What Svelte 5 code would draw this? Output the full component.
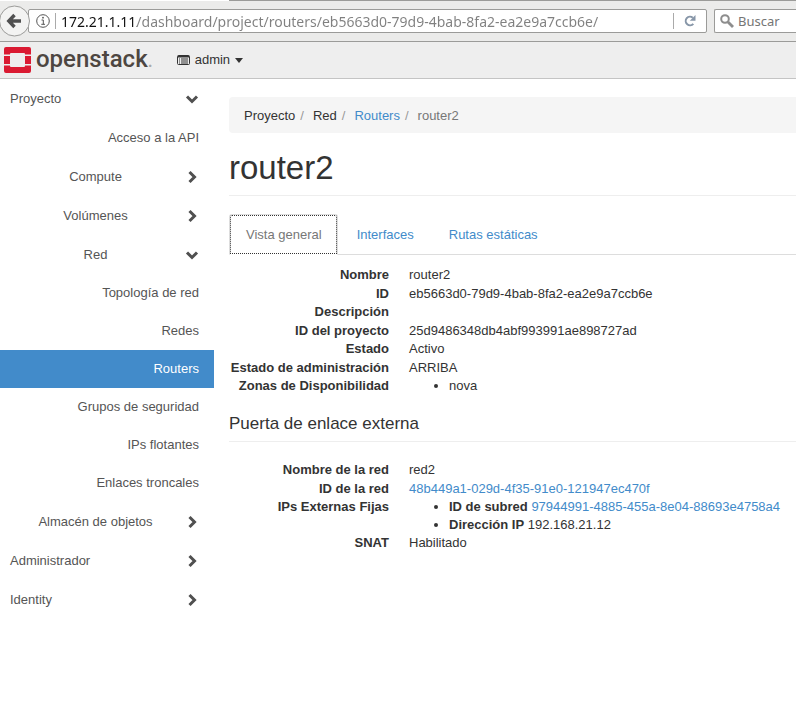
<script>
  const address = '172.21.1.11/dashboard/project/routers/eb5663d0-79d9-4bab-8fa2-ea2e9a7ccb6e/';

  const menu = [
    { label: 'Proyecto', kind: 'panel', open: true },
    { label: 'Acceso a la API', kind: 'entry' },
    { label: 'Compute', kind: 'group', open: false },
    { label: 'Volúmenes', kind: 'group', open: false },
    { label: 'Red', kind: 'group', open: true },
    { label: 'Topología de red', kind: 'leaf' },
    { label: 'Redes', kind: 'leaf' },
    { label: 'Routers', kind: 'leaf', active: true },
    { label: 'Grupos de seguridad', kind: 'leaf' },
    { label: 'IPs flotantes', kind: 'leaf' },
    { label: 'Enlaces troncales', kind: 'leaf' },
    { label: 'Almacén de objetos', kind: 'group', open: false },
    { label: 'Administrador', kind: 'panel', open: false },
    { label: 'Identity', kind: 'panel', open: false }
  ];

  const tabs = ['Vista general', 'Interfaces', 'Rutas estáticas'];
  let current = $state(0);

  const details = [
    ['Nombre', 'router2'],
    ['ID', 'eb5663d0-79d9-4bab-8fa2-ea2e9a7ccb6e'],
    ['Descripción', ''],
    ['ID del proyecto', '25d9486348db4abf993991ae898727ad'],
    ['Estado', 'Activo'],
    ['Estado de administración', 'ARRIBA']
  ];
</script>

<div class="window">
  <div class="strip"></div>
  <div class="toolbar">
    <button class="back" aria-label="Atrás">
      <svg width="32" height="32" viewBox="0 0 32 32">
        <circle cx="14.500" cy="16" r="15" fill="#f3f3f2" stroke="#9b9b99" />
        <path d="M14.500 10 8.800 16 14.500 22M9 16H21" fill="none" stroke="#505050" stroke-width="3.400" />
      </svg>
    </button>
    <div class="address">
      <svg width="14" height="14" viewBox="0 0 14 14">
        <circle cx="7" cy="7" r="6.300" fill="none" stroke="#555" />
        <path d="M5.500 6H7.300V10.300M5.300 10.300H9" fill="none" stroke="#555" />
        <circle cx="7" cy="3.700" r=".9" fill="#555" />
      </svg>
      <span class="rule"></span>
      <input class="url" type="text" aria-label="Dirección" value={address} />
      <span class="rule"></span>
      <button class="reload" aria-label="Recargar">
        <svg width="12" height="12" viewBox="0 0 12 12">
          <path d="M9.300 8.800A4.300 4.300 0 1 1 8.800 2.700" fill="none" stroke="#8796a8" stroke-width="2" />
          <path d="M11.500 0V5.700H5.800Z" fill="#8796a8" />
        </svg>
      </button>
    </div>
    <div class="search">
      <svg width="14" height="14" viewBox="0 0 14 14">
        <circle cx="5" cy="5" r="3.800" fill="none" stroke="#8d8d8d" stroke-width="2" />
        <path d="M8 8 13 13" stroke="#8d8d8d" stroke-width="2.800" />
      </svg>
      <input type="text" aria-label="Buscar" placeholder="Buscar" />
    </div>
  </div>

  <header>
    <a class="logo" href="#home">
      <svg width="27" height="26" viewBox="0 0 27 26">
        <path fill="#da1a32" d="M2 0H25Q27 0 27 2V7.500H21V7Q21 6 20 6H7Q6 6 6 7V7.500H0V2Q0 0 2 0Z" />
        <path fill="#da1a32" d="M0 18.500H6V19Q6 20 7 20H20Q21 20 21 19V18.500H27V24Q27 26 25 26H2Q0 26 0 24Z" />
        <path fill="#da1a32" d="M0 9H6V17H0ZM21 9H27V17H21Z" />
      </svg>
      <span>openstack<small>.</small></span>
    </a>
    <button class="project">
      <svg width="13" height="10" viewBox="0 0 13 10">
        <rect x=".5" y=".5" width="12" height="9" rx="1" fill="none" stroke="#333" />
        <path d="M1 1.500H12" stroke="#333" stroke-width="2" />
        <path d="M2 4H3M4 4H11M2 6H3M4 6H11M2 8H3M4 8H11" stroke="#333" />
      </svg>
      admin
      <svg width="8" height="5" viewBox="0 0 8 5"><path d="M0 0H8L4 5Z" fill="#333" /></svg>
    </button>
  </header>

  <div class="body">
    <nav>
      {#each menu as item}
        <a href="#menu" class={item.kind} class:active={item.active}>
          <span>{item.label}</span>
          {#if item.open !== undefined}
            <svg class:open={item.open} width="14" height="14" viewBox="0 0 14 14">
              <path d="M4.500 2 9.500 7 4.500 12" fill="none" stroke="#505050" stroke-width="3" />
            </svg>
          {/if}
        </a>
      {/each}
    </nav>

    <main>
      <ol class="breadcrumb">
        <li>Proyecto</li>
        <li>Red</li>
        <li><a href="#routers">Routers</a></li>
        <li class="here">router2</li>
      </ol>
      <h1>router2</h1>
      <div class="tabs" role="tablist">
        {#each tabs as tab, i}
          <button role="tab" aria-selected={current === i} class:selected={current === i} onclick={() => (current = i)}>{tab}</button>
        {/each}
      </div>

      <dl>
        {#each details as [term, value]}
          <dt>{term}</dt>
          <dd>{value}</dd>
        {/each}
        <dt>Zonas de Disponibilidad</dt>
        <dd><ul><li>nova</li></ul></dd>
      </dl>

      <h4>Puerta de enlace externa</h4>
      <dl>
        <dt>Nombre de la red</dt>
        <dd>red2</dd>
        <dt>ID de la red</dt>
        <dd><a href="#net">48b449a1-029d-4f35-91e0-121947ec470f</a></dd>
        <dt>IPs Externas Fijas</dt>
        <dd>
          <ul>
            <li><b>ID de subred</b> <a href="#subnet">97944991-4885-455a-8e04-88693e4758a4</a></li>
            <li><b>Dirección IP</b> 192.168.21.12</li>
          </ul>
        </dd>
        <dt>SNAT</dt>
        <dd>Habilitado</dd>
      </dl>
    </main>
  </div>
</div>

<style>
  :global(body) {
    margin: 0;
    background: #fff;
  }
  .window {
    min-height: 100vh;
    overflow: hidden;
    color: #333;
    font: 13px/18px 'Liberation Sans', Arial, sans-serif;
  }
  .window * {
    box-sizing: border-box;
  }
  button,
  input {
    margin: 0;
    padding: 0;
    border: 0;
    outline: 0;
    background: none;
    color: inherit;
    font: inherit;
  }
  a {
    color: #428bca;
    text-decoration: none;
  }
  svg {
    display: block;
    flex: none;
  }
  .strip {
    height: 1px;
    margin-left: 229px;
    background: #9b9b99;
  }
  .toolbar {
    display: flex;
    align-items: center;
    height: 41px;
    border-bottom: 1px solid #9b9b99;
    background: #ebebea;
    font-family: 'Noto Sans', sans-serif;
  }
  .back {
    z-index: 1;
    width: 32px;
    margin-right: -4px;
  }
  .address,
  .search {
    display: flex;
    align-items: center;
    height: 24px;
    border: 1px solid #9b9b99;
    border-radius: 2px;
    background: #fff;
  }
  .address {
    flex: 1;
    min-width: 0;
    gap: 5px;
    margin-right: 7px;
    padding-left: 7px;
  }
  .rule {
    width: 1px;
    height: 16px;
    background: #aaa;
  }
  .url {
    flex: 1;
    min-width: 0;
    height: 20px;
    background: linear-gradient(90deg, #111 76px, #808080 76px);
    background-clip: text;
    font-size: 14px;
    -webkit-text-fill-color: transparent;
  }
  .reload {
    width: 27px;
    padding-left: 5px;
  }
  .search {
    width: 82px;
    gap: 4px;
    padding-left: 5px;
    border-right: 0;
    border-radius: 2px 0 0 2px;
  }
  .search input {
    width: 100%;
    min-width: 0;
  }
  .search input::placeholder {
    color: #757575;
  }
  header {
    display: flex;
    align-items: center;
    height: 37px;
    gap: 24px;
    padding-left: 4px;
    border-bottom: 1px solid #c4c4c4;
    background: #eee;
  }
  .logo {
    display: flex;
    align-items: center;
    gap: 5px;
    color: #4d4641;
    font: 500 24px/28px Roboto, sans-serif;
  }
  .logo span {
    height: 30px;
  }
  .logo small {
    color: #aaa;
    font-size: 18px;
  }
  .project {
    display: flex;
    align-items: center;
    gap: 5px;
  }
  .body {
    display: flex;
    gap: 15px;
  }
  nav {
    flex: none;
    width: 214px;
  }
  nav a {
    display: flex;
    align-items: center;
    height: 39px;
    padding: 0 15px 0 10px;
    color: #555;
  }
  nav span {
    flex: 1;
  }
  nav svg.open {
    transform: rotate(90deg);
  }
  .group {
    padding-left: 6px;
  }
  .group span {
    text-align: center;
  }
  .entry,
  .leaf {
    text-align: right;
  }
  .leaf {
    height: 38px;
  }
  nav .active {
    background: #428bca;
    color: #fff;
  }
  main {
    flex: 1;
    min-width: 0;
    padding-top: 18px;
  }
  ul,
  ol,
  dl,
  dd {
    margin: 0;
    padding: 0;
  }
  .breadcrumb {
    display: flex;
    padding: 10px 15px 8px;
    border-radius: 4px 0 0 4px;
    background: #f5f5f5;
    list-style: none;
  }
  .breadcrumb li:not(:last-child)::after {
    padding: 0 9px 0 5px;
    color: #999;
    content: '/';
  }
  .breadcrumb .here {
    color: #777;
  }
  h1 {
    margin: 17px 0 18px;
    padding-bottom: 9px;
    border-bottom: 1px solid #eee;
    font-size: 33px;
    font-weight: 400;
    line-height: 36px;
  }
  .tabs {
    display: flex;
    gap: 2px;
    border-bottom: 1px solid #ddd;
  }
  .tabs button {
    height: 41px;
    margin-bottom: -1px;
    padding: 0 15px 0 16px;
    border: 1px solid transparent;
    color: #428bca;
  }
  .tabs .selected {
    border: 1px solid #ddd;
    border-bottom-color: #fff;
    border-radius: 3px 3px 0 0;
    outline: 1px dotted #333;
    outline-offset: -2px;
    background: #fff;
    color: #777;
  }
  dl {
    display: grid;
    grid-template-columns: 160px 1fr;
    grid-auto-rows: minmax(19px, auto) minmax(18px, auto);
    column-gap: 20px;
    padding-top: 11px;
  }
  dt {
    font-weight: 700;
    text-align: right;
    white-space: nowrap;
  }
  dd ul {
    padding-left: 40px;
  }
  h4 {
    margin: 18px 0 8px;
    padding-bottom: 8px;
    border-bottom: 1px solid #eee;
    font-size: 17px;
    font-weight: 400;
    line-height: 19px;
  }
</style>
